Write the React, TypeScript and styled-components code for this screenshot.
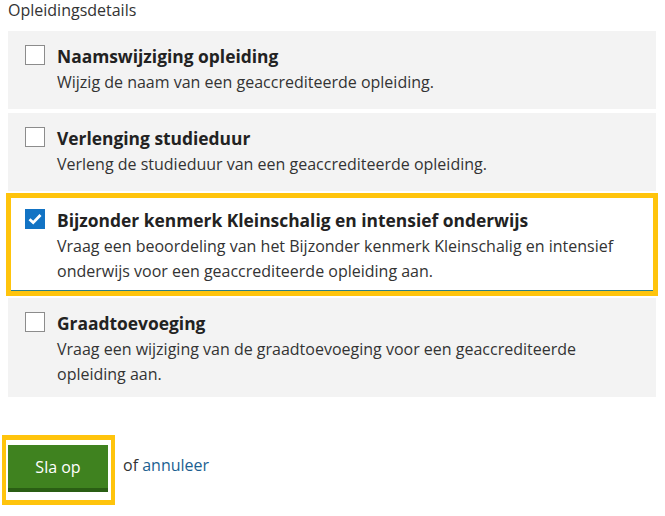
import React, { useState } from 'react';
import styled, { createGlobalStyle } from 'styled-components';

const GlobalStyle = createGlobalStyle`
  html, body {
    margin: 0;
    padding: 0;
    background: #ffffff;
  }
  body {
    font-family: 'Open Sans', 'Noto Sans', sans-serif;
    color: #222222;
  }
`;

const Page = styled.form`
  padding: 0 9px 0 8px;
`;

const Fieldset = styled.fieldset`
  border: 0;
  margin: 0;
  padding: 0;
`;

const Legend = styled.legend`
  padding: 0;
  font-size: 16px;
  line-height: 20px;
  color: #333333;
  margin-bottom: 11px;
`;

const OptionList = styled.div`
  display: flex;
  flex-direction: column;
  gap: 4px;
`;

const Option = styled.label<{ $checked: boolean }>`
  box-sizing: border-box;
  display: grid;
  grid-template-columns: 20px 1fr;
  column-gap: 12px;
  min-height: 78px;
  padding: 14px 16px ${(p) => (p.$checked ? '6px' : '10px')} 17px;
  cursor: pointer;
  background: ${(p) => (p.$checked ? '#ffffff' : '#f3f3f3')};
  border-bottom: ${(p) => (p.$checked ? '4px solid #2f7f86' : '0')};
  outline: ${(p) => (p.$checked ? '5px solid #ffc40c' : 'none')};
  outline-offset: -3px;
`;

const HiddenInput = styled.input`
  position: absolute;
  opacity: 0;
  width: 0;
  height: 0;
`;

const Box = styled.span<{ $checked: boolean }>`
  box-sizing: border-box;
  display: flex;
  align-items: center;
  justify-content: center;
  width: 20px;
  height: 20px;
  background: ${(p) => (p.$checked ? '#1273c4' : '#ffffff')};
  border: 1px solid ${(p) => (p.$checked ? '#1273c4' : '#8c8c8c')};
`;

const Text = styled.span`
  display: flex;
  flex-direction: column;
`;

const Title = styled.span`
  font-size: 17.4px;
  line-height: 22px;
  font-weight: 700;
  color: #222222;
  margin-bottom: 3px;
`;

const Description = styled.span`
  font-size: 16px;
  line-height: 25px;
  color: #333333;
`;

const Actions = styled.div`
  display: flex;
  align-items: flex-start;
  margin-top: 38px;
  margin-left: -6px;
`;

const FocusRing = styled.span`
  display: inline-block;
  border: 5px solid #ffc40c;
  border-left-width: 4px;
  border-right-width: 4px;
  padding: 5px 3px 8px 2px;
`;

const SaveButton = styled.button`
  box-sizing: border-box;
  display: block;
  width: 100px;
  height: 47px;
  border: 0;
  border-bottom: 4px solid #2a5e14;
  background: #3f821f;
  color: #ffffff;
  font-family: 'Open Sans', 'Noto Sans', sans-serif;
  font-size: 16px;
  padding: 0;
  cursor: pointer;
`;

const Cancel = styled.span`
  font-size: 16px;
  line-height: 20px;
  color: #333333;
  margin-left: 8px;
  margin-top: 20px;
`;

const CancelLink = styled.a`
  color: #1c5f91;
  text-decoration: none;
`;

const options = [
  {
    id: 'naam',
    title: 'Naamswijziging opleiding',
    text: 'Wijzig de naam van een geaccrediteerde opleiding.',
  },
  {
    id: 'duur',
    title: 'Verlenging studieduur',
    text: 'Verleng de studieduur van een geaccrediteerde opleiding.',
  },
  {
    id: 'kenmerk',
    title: 'Bijzonder kenmerk Kleinschalig en intensief onderwijs',
    text: 'Vraag een beoordeling van het Bijzonder kenmerk Kleinschalig en intensief onderwijs voor een geaccrediteerde opleiding aan.',
  },
  {
    id: 'graad',
    title: 'Graadtoevoeging',
    text: 'Vraag een wijziging van de graadtoevoeging voor een geaccrediteerde opleiding aan.',
  },
];

const Check = () => (
  <svg width="14" height="12" viewBox="0 0 14 12" aria-hidden="true">
    <path d="M1.5 6.2 L5.2 9.6 L12.5 2" fill="none" stroke="#ffffff" strokeWidth="2.8" />
  </svg>
);

export default function App() {
  const [selected, setSelected] = useState<string[]>(['kenmerk']);

  const toggle = (id: string) =>
    setSelected((s) => (s.includes(id) ? s.filter((x) => x !== id) : [...s, id]));

  return (
    <>
      <GlobalStyle />
      <Page onSubmit={(e) => e.preventDefault()}>
        <Fieldset>
          <Legend>Opleidingsdetails</Legend>
          <OptionList>
            {options.map((o) => {
              const checked = selected.includes(o.id);
              return (
                <Option key={o.id} $checked={checked}>
                  <HiddenInput type="checkbox" checked={checked} onChange={() => toggle(o.id)} />
                  <Box $checked={checked}>{checked && <Check />}</Box>
                  <Text>
                    <Title>{o.title}</Title>
                    <Description>{o.text}</Description>
                  </Text>
                </Option>
              );
            })}
          </OptionList>
        </Fieldset>
        <Actions>
          <FocusRing>
            <SaveButton type="submit">Sla op</SaveButton>
          </FocusRing>
          <Cancel>
            of <CancelLink href="#">annuleer</CancelLink>
          </Cancel>
        </Actions>
      </Page>
    </>
  );
}
